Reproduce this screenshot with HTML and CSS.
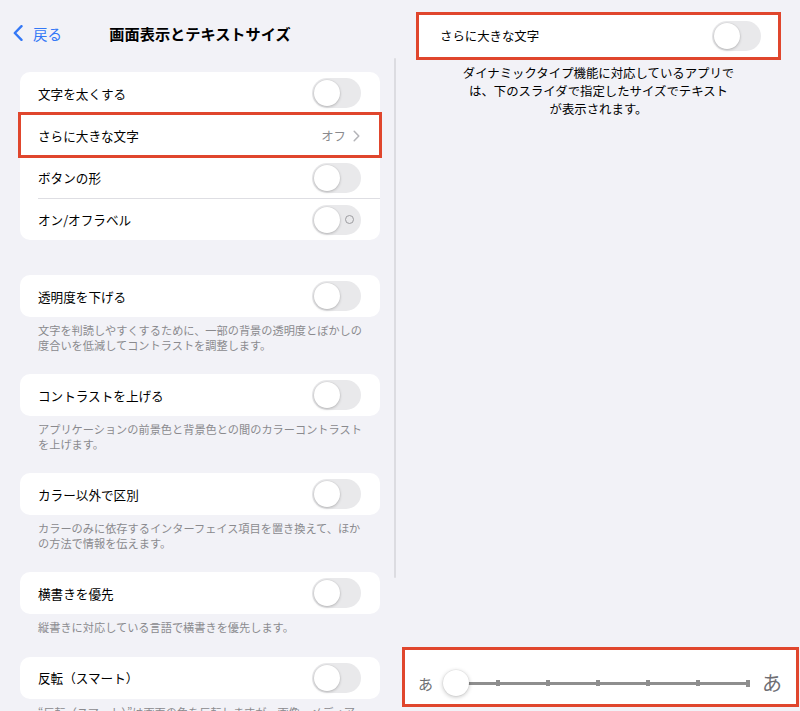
FILE: index.html
```html
<!DOCTYPE html>
<html lang="ja">
  <head>
    <meta charset="UTF-8" />
    <meta name="viewport" content="width=device-width, initial-scale=1.0" />
    <title>画面表示とテキストサイズ</title>
    <link rel="stylesheet" href="styles.css">
  </head>
  <body>
    <div class="split">
      <!-- 左：設定リスト -->
      <section class="master">
        <header class="nav">
          <a class="back" href="#">
            <svg width="10" height="16" viewBox="0 0 10 16" aria-hidden="true">
              <path d="M8.5 1.2 L1.8 8 L8.5 14.8" fill="none" stroke="currentColor" stroke-width="2.4" stroke-linecap="round" stroke-linejoin="round" />
            </svg>
            <span>戻る</span>
          </a>
          <h1 class="nav-title">画面表示とテキストサイズ</h1>
          <span></span>
        </header>

        <div class="card">
          <div class="row">
            <div class="row-body">
              <span class="label">文字を太くする</span>
              <span class="switch"><span class="knob"></span></span>
            </div>
          </div>
          <div class="row is-marked">
            <div class="row-body">
              <span class="label">さらに大きな文字</span>
              <span class="value">オフ
                <svg width="7" height="12" viewBox="0 0 7 12" aria-hidden="true">
                  <path d="M1.2 1.2 L5.8 6 L1.2 10.8" fill="none" stroke="currentColor" stroke-width="1.5" stroke-linecap="round" stroke-linejoin="round" />
                </svg>
              </span>
            </div>
          </div>
          <div class="row">
            <div class="row-body">
              <span class="label">ボタンの形</span>
              <span class="switch"><span class="knob"></span></span>
            </div>
          </div>
          <div class="row">
            <div class="row-body">
              <span class="label">オン/オフラベル</span>
              <span class="switch"><span class="knob"></span><span class="ring"></span></span>
            </div>
          </div>
        </div>

        <div class="card">
          <div class="row">
            <div class="row-body">
              <span class="label">透明度を下げる</span>
              <span class="switch"><span class="knob"></span></span>
            </div>
          </div>
        </div>
        <p class="note">文字を判読しやすくするために、一部の背景の透明度とぼかしの<br>度合いを低減してコントラストを調整します。</p>

        <div class="card">
          <div class="row">
            <div class="row-body">
              <span class="label">コントラストを上げる</span>
              <span class="switch"><span class="knob"></span></span>
            </div>
          </div>
        </div>
        <p class="note">アプリケーションの前景色と背景色との間のカラーコントラスト<br>を上げます。</p>

        <div class="card">
          <div class="row">
            <div class="row-body">
              <span class="label">カラー以外で区別</span>
              <span class="switch"><span class="knob"></span></span>
            </div>
          </div>
        </div>
        <p class="note">カラーのみに依存するインターフェイス項目を置き換えて、ほか<br>の方法で情報を伝えます。</p>

        <div class="card">
          <div class="row">
            <div class="row-body">
              <span class="label">横書きを優先</span>
              <span class="switch"><span class="knob"></span></span>
            </div>
          </div>
        </div>
        <p class="note">縦書きに対応している言語で横書きを優先します。</p>

        <div class="card">
          <div class="row">
            <div class="row-body">
              <span class="label">反転（スマート）</span>
              <span class="switch"><span class="knob"></span></span>
            </div>
          </div>
        </div>
        <p class="note">“反転（スマート）”は画面の色を反転しますが、画像、メディア<br>、および暗い色のスタイルを使用する一部のアプリは除きます。</p>

        <span class="scroll-bar" aria-hidden="true"></span>
      </section>

      <!-- 右：さらに大きな文字 -->
      <section class="detail">
        <div class="big-row">
          <span class="label">さらに大きな文字</span>
          <span class="switch"><span class="knob"></span></span>
        </div>
        <p class="detail-text">ダイナミックタイプ機能に対応しているアプリで<br>は、下のスライダで指定したサイズでテキスト<br>が表示されます。</p>

        <div class="slider-bar">
          <span class="glyph-sm">あ</span>
          <div class="track">
            <span class="thumb"></span>
            <div class="ticks">
              <i></i><i></i><i></i><i></i><i></i><i></i><i></i>
            </div>
          </div>
          <span class="glyph-lg">あ</span>
        </div>
      </section>
    </div>
  </body>
</html>
```

FILE: styles.css
```css
* {
  box-sizing: border-box;
}

html,
body {
  margin: 0;
  height: 711px;
  overflow: hidden;
}

body {
  background: #f2f2f7;
  color: #000;
  font-family: "Noto Sans CJK JP", "Noto Sans", sans-serif;
}

.split {
  display: flex;
  height: 711px;
}

/* ---------- left ---------- */

.master {
  position: relative;
  width: 400px;
  padding: 0 20px;
  overflow: hidden;
}

.nav {
  display: grid;
  grid-template-columns: 1fr auto 1fr;
  align-items: center;
  height: 66px;
  margin: 0 -20px;
  padding: 0 13px;
}

.back {
  display: flex;
  align-items: center;
  gap: 10px;
  color: #3478f6;
  font-size: 14.5px;
  text-decoration: none;
}

.nav-title {
  margin: 0;
  font-size: 15.2px;
  font-weight: 700;
}

.card {
  background: #fff;
  border-radius: 10px;
  margin-top: 6px;
}

.card + .card {
  margin-top: 35px;
}

.note + .card {
  margin-top: 0;
}

.row {
  padding-left: 18px;
}

.row-body {
  display: flex;
  align-items: center;
  justify-content: space-between;
  height: 42px;
  padding-right: 19px;
}

.row + .row .row-body {
  border-top: 1px solid #dedee3;
}

.row.is-marked {
  outline: 3px solid #e0462d;
  outline-offset: -1px;
  position: relative;
}

.row.is-marked .row-body {
  border-top-color: transparent;
}

.row.is-marked + .row .row-body {
  border-top-color: transparent;
}

.label {
  font-size: 12.6px;
}

.value {
  display: flex;
  align-items: center;
  gap: 7px;
  color: #8a8a8e;
  font-size: 12.4px;
  padding-right: 1px;
}

.value svg {
  color: #b4b4b8;
}

.switch {
  display: flex;
  align-items: center;
  justify-content: space-between;
  width: 49px;
  height: 30px;
  padding: 2px;
  border-radius: 15px;
  background: #e9e9eb;
}

.knob {
  width: 26px;
  height: 26px;
  border-radius: 50%;
  background: #fff;
  box-shadow: 0 1px 3px rgba(0, 0, 0, 0.22), 0 0 0 0.5px rgba(0, 0, 0, 0.05);
}

.ring {
  width: 9px;
  height: 9px;
  margin-right: 5px;
  border: 1px solid #9c9ca0;
  border-radius: 50%;
}

.note {
  margin: 0 0 22px;
  padding: 6px 18px 0;
  color: #8a8a8e;
  font-size: 11.2px;
  line-height: 14.5px;
  white-space: nowrap;
}

.scroll-bar {
  position: absolute;
  top: 58px;
  right: 4px;
  width: 2.5px;
  height: 520px;
  border-radius: 2px;
  background: #dcdce1;
}

/* ---------- right ---------- */

.detail {
  display: flex;
  flex-direction: column;
  width: 400px;
}

.big-row {
  display: flex;
  align-items: center;
  justify-content: space-between;
  height: 48px;
  margin: 12px 19px 0 16px;
  padding: 0 17px 0 21px;
  background: #fff;
  border: 3px solid #e0462d;
}

.big-row .label {
  font-size: 12.4px;
}

.detail-text {
  margin: 4px 19px 0 16px;
  font-size: 12.4px;
  line-height: 18px;
  text-align: center;
}

.slider-bar {
  display: flex;
  align-items: center;
  height: 60px;
  margin: auto 1px 4px 2px;
  padding: 12px 14px 0 13px;
  background: #fff;
  border: 3px solid #e0462d;
}

.glyph-sm {
  width: 15px;
  color: #6e6e73;
  font-size: 15px;
  line-height: 1;
}

.glyph-lg {
  width: 20px;
  margin-left: 12px;
  color: #6e6e73;
  font-size: 20px;
  line-height: 1;
}

.track {
  position: relative;
  display: flex;
  align-items: center;
  flex: 1;
  height: 26px;
  margin-left: 10px;
  padding-left: 3px;
}

.ticks {
  display: flex;
  align-items: center;
  justify-content: space-between;
  flex: 1;
  height: 7px;
  background: linear-gradient(#8e8e8e, #8e8e8e) center / 100% 3px no-repeat;
}

.ticks i {
  width: 4px;
  height: 6px;
  background: #8e8e8e;
}

.ticks i:last-child {
  height: 7px;
}

.thumb {
  position: absolute;
  top: 0;
  left: 0;
  width: 26px;
  height: 26px;
  border-radius: 50%;
  background: #fff;
  box-shadow: 0 1px 4px rgba(0, 0, 0, 0.25), 0 0 0 0.5px rgba(0, 0, 0, 0.06);
  z-index: 1;
}
```
